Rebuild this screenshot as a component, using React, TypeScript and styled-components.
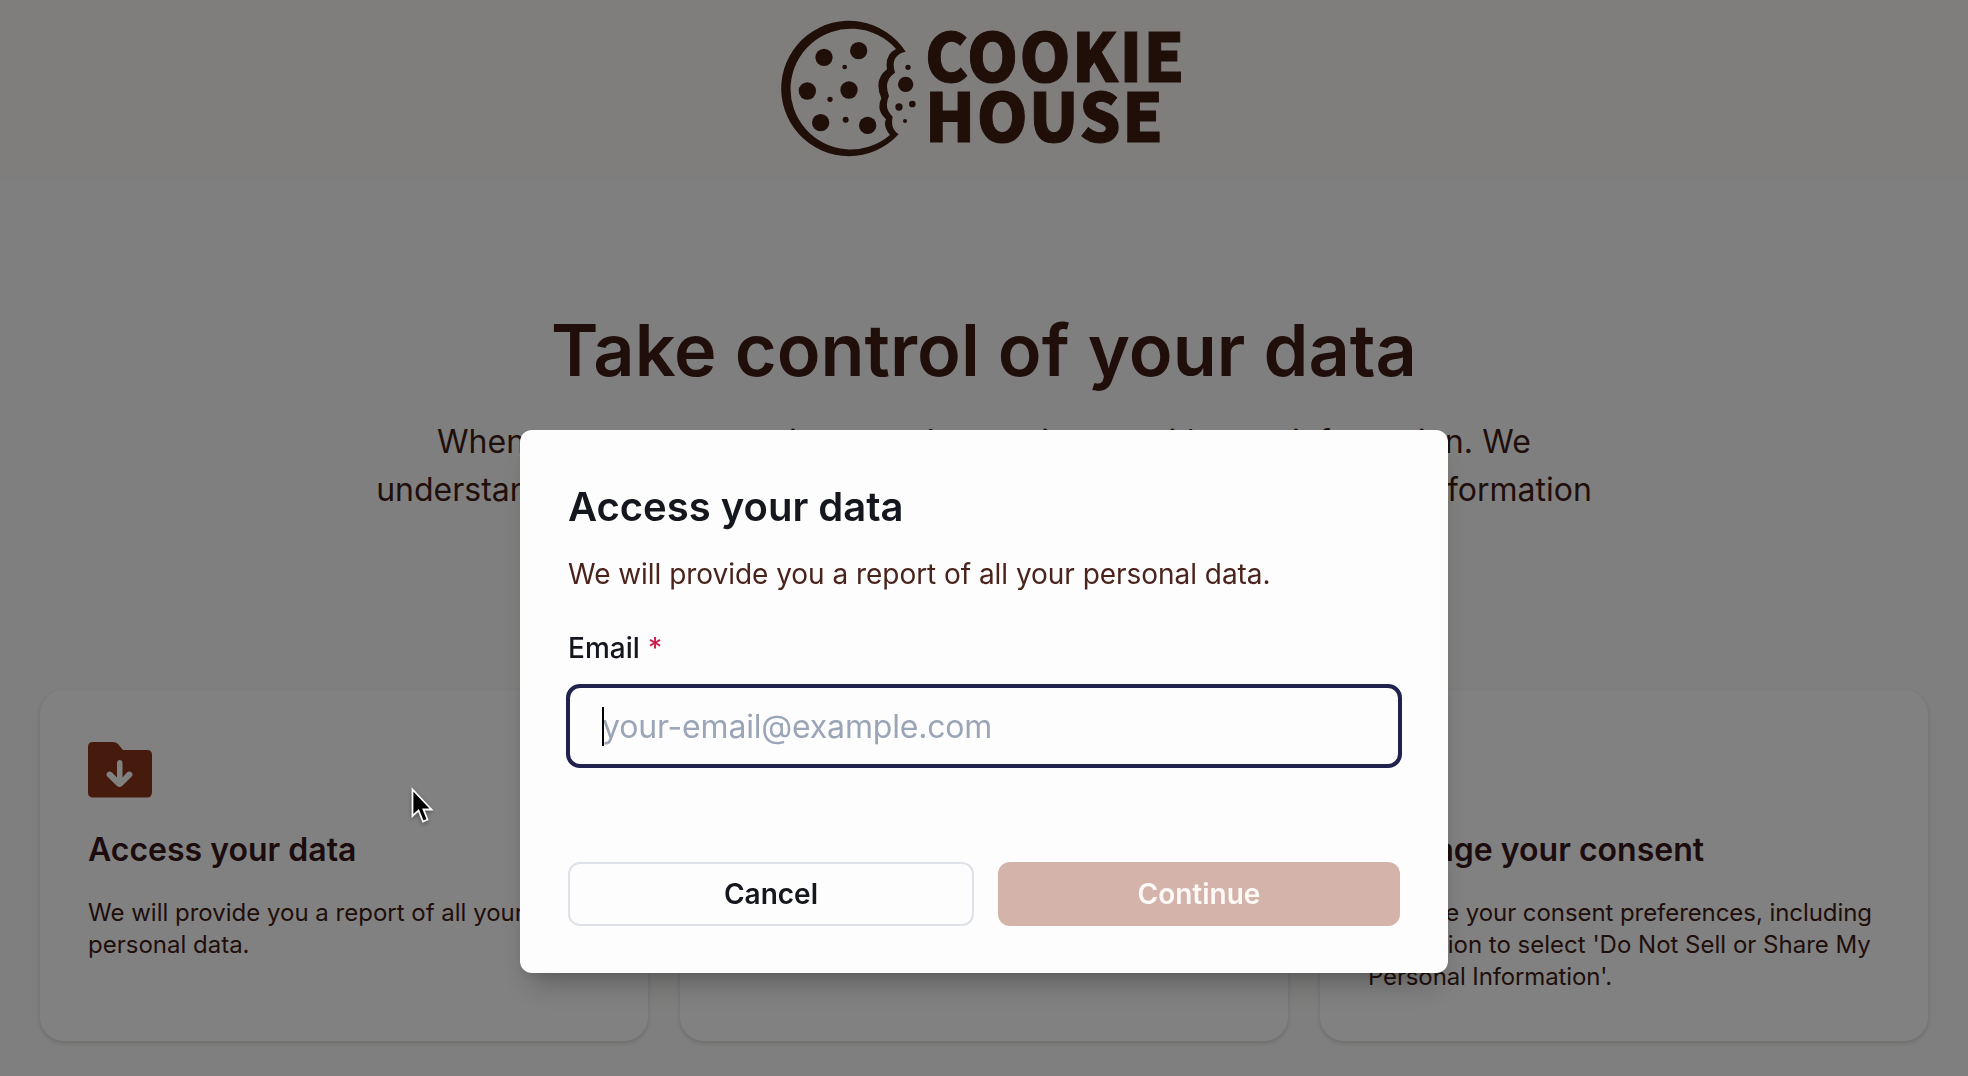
import React from "react";
import styled, { createGlobalStyle } from "styled-components";

const GlobalStyle = createGlobalStyle`
  *, *::before, *::after { box-sizing: border-box; }
  body {
    margin: 0;
    overflow: hidden;
    background: #fcfcfb;
    font-family: Inter, "Liberation Sans", sans-serif;
    -webkit-font-smoothing: antialiased;
  }
  h1, h2, p { margin: 0; }
`;

const Page = styled.div`
  height: 1076px;
  overflow: hidden;
  color: #401c16;
`;

const Header = styled.header`
  height: 179px;
  display: flex;
  justify-content: center;
  background: #fbfaf6;
`;

const Logo = styled.svg`
  width: 440px;
  height: 179px;
  margin-right: 8px;
  fill: #401c12;
`;

const LogoText = styled.text`
  font-family: "Noto Sans CJK SC", "Noto Sans", sans-serif;
  font-size: 67px;
  font-weight: 900;
  letter-spacing: 1.5px;
  stroke: #401c12;
  stroke-width: 1px;
`;

const Main = styled.main`
  display: flex;
  flex-direction: column;
  align-items: center;
  padding: 123px 40px 0;
`;

const Title = styled.h1`
  font-size: 72px;
  line-height: 96px;
  font-weight: 600;
  white-space: nowrap;
`;

const Intro = styled.p`
  margin-top: 20px;
  height: 272px;
  font-size: 32px;
  line-height: 48px;
  font-weight: 400;
  text-align: center;
  white-space: nowrap;
`;

const Line = styled.span<{ $word?: number; $letter?: number }>`
  display: block;
  word-spacing: ${(p) => p.$word ?? 0}px;
  letter-spacing: ${(p) => p.$letter ?? 0}px;
`;

const Cards = styled.section`
  width: 100%;
  display: grid;
  grid-template-columns: repeat(3, 1fr);
  gap: 32px;
`;

const Card = styled.article`
  height: 351px;
  padding: 48px;
  display: flex;
  flex-direction: column;
  align-items: flex-start;
  border-radius: 24px;
  background: #ffffff;
  box-shadow: 0 2px 4px rgba(0, 0, 0, 0.11), 0 2px 6px rgba(0, 0, 0, 0.06);
`;

const CardIcon = styled.svg`
  width: 64px;
  height: 64px;
  fill: #8c351c;
`;

const CardTitle = styled.h2`
  margin-top: 28px;
  font-size: 32px;
  line-height: 40px;
  font-weight: 600;
  color: #38181c;
  white-space: nowrap;
`;

const CardText = styled.p`
  margin-top: 27px;
  font-size: 24px;
  line-height: 32px;
  font-weight: 400;
  white-space: nowrap;
`;

const Overlay = styled.div`
  position: fixed;
  inset: 0;
  padding-top: 430px;
  display: flex;
  align-items: flex-start;
  justify-content: center;
  background: rgba(0, 0, 0, 0.495);
`;

const Dialog = styled.section`
  width: 928px;
  height: 543px;
  padding: 53px 48px 47px;
  display: flex;
  flex-direction: column;
  border-radius: 12px;
  background: #fdfdfd;
  box-shadow: 0 20px 30px -10px rgba(0, 0, 0, 0.25), 0 8px 12px -6px rgba(0, 0, 0, 0.12);
`;

const DialogTitle = styled.h2`
  font-size: 40px;
  line-height: 48px;
  font-weight: 600;
  color: #15171f;
`;

const DialogText = styled.p`
  margin-top: 23px;
  font-size: 28px;
  line-height: 40px;
  letter-spacing: -0.04px;
  color: #4a231d;
  white-space: nowrap;
`;

const Label = styled.label`
  margin-top: 34px;
  font-size: 28px;
  line-height: 40px;
  font-weight: 500;
  color: #15171f;
`;

const Required = styled.span`
  margin-left: 8px;
  color: #cb1f4d;
`;

const Field = styled.div`
  position: relative;
  margin: 16px -2px 0;
`;

const Input = styled.input`
  display: block;
  width: 100%;
  height: 84px;
  padding: 0 32px;
  border: 4px solid #20234d;
  border-radius: 14px;
  outline: none;
  background: transparent;
  caret-color: transparent;
  font: 400 32px/48px Inter, "Liberation Sans", sans-serif;
  letter-spacing: -0.18px;
  color: #15171f;
  &::placeholder { color: #9ba5b8; opacity: 1; }
`;

const Caret = styled.span`
  position: absolute;
  left: 36px;
  top: 23px;
  width: 2px;
  height: 39px;
  background: #000;
`;

const Actions = styled.div`
  margin-top: auto;
  display: grid;
  grid-template-columns: 406px 402px;
  justify-content: space-between;
`;

const Button = styled.button<{ $primary?: boolean }>`
  height: 64px;
  padding: 0;
  border: ${(p) => (p.$primary ? "0" : "2px solid #dfe1e8")};
  border-radius: 12px;
  background: ${(p) => (p.$primary ? "#d4b3aa" : "transparent")};
  color: ${(p) => (p.$primary ? "#fdf9f7" : "#15171f")};
  font: 600 28px/40px Inter, "Liberation Sans", sans-serif;
`;

const Pointer = styled.svg`
  position: fixed;
  left: 406px;
  top: 781px;
  width: 32px;
  height: 46px;
  filter: drop-shadow(0 2px 2px rgba(0, 0, 0, 0.35));
`;

const CHIPS = [
  [192, 172, 26], [296, 152, 26], [142, 273, 26], [267, 270, 26],
  [182, 368, 26], [323, 376, 26], [254, 201, 7], [210, 298, 8],
  [257, 359, 9], [444, 202, 8], [437, 253, 23], [417, 321, 11],
  [457, 312, 10], [435, 363, 6],
];

const CookieLogo = () => (
  <Logo viewBox="0 0 440 179" role="img" aria-label="Cookie House">
    <g transform="scale(0.33333)">
      <path
        fillRule="evenodd"
        d="M437 155A203 203 0 1 0 416 403Q390 386 398 350Q370 324 387 288Q369 242 405 218Q389 166 437 155Z
           M408 147A181 181 0 1 0 390 405Q368 378 378 358Q347 330 364 295Q340 238 381 208Q374 164 408 147Z"
      />
      {CHIPS.map(([cx, cy, r]) => (
        <circle key={`${cx}-${cy}`} cx={cx} cy={cy} r={r} />
      ))}
    </g>
    <LogoText x="165" y="81.500" textLength="261" lengthAdjust="spacingAndGlyphs">COOKIE</LogoText>
    <LogoText x="165" y="141.500" textLength="239.500" lengthAdjust="spacingAndGlyphs">HOUSE</LogoText>
  </Logo>
);

const FolderIcon = () => (
  <CardIcon viewBox="0 0 64 64">
    <path
      fillRule="evenodd"
      d="M5 4H25Q28 4 30 6L35 12H59Q64 12 64 17V54Q64 59.500 59 59.500H5Q0 59.500 0 54.500V9Q0 4 5 4Z
         M29 25V39.500L24 34.500C21 31.500 16.500 35.500 19.500 38.800L29 48Q31.500 50 34 48L43.500 38.800C46.500 35.500 42 31.500 39 34.500L34.500 39.500V25C34.500 21 29 21 29 25Z"
    />
  </CardIcon>
);

const ShieldIcon = () => (
  <CardIcon viewBox="0 0 64 64">
    <path d="M32 4L58 14V31Q56 50 32 60Q8 50 6 31V14Z" />
  </CardIcon>
);

export default function App() {
  return (
    <>
      <GlobalStyle />
      <Page>
        <Header>
          <CookieLogo />
        </Header>
        <Main>
          <Title>Take control of your data</Title>
          <Intro>
            <Line $word={0.45}>When you use our services, you’re trusting us with your information. We</Line>
            <Line $word={1.25}>
              understand this is a big responsibility and work hard to protect your information
            </Line>
            <Line>and put you in control.</Line>
          </Intro>
          <Cards>
            <Card>
              <FolderIcon />
              <CardTitle>Access your data</CardTitle>
              <CardText>
                <Line>We will provide you a report of all your</Line>
                <Line>personal data.</Line>
              </CardText>
            </Card>
            <Card>
              <ShieldIcon />
              <CardTitle>Erase your data</CardTitle>
              <CardText>We will erase all of your personal data.</CardText>
            </Card>
            <Card>
              <ShieldIcon />
              <CardTitle>Manage your consent</CardTitle>
              <CardText>
                <Line $letter={-0.07}>Manage your consent preferences, including</Line>
                <Line>the option to select 'Do Not Sell or Share My</Line>
                <Line $letter={-0.13}>Personal Information'.</Line>
              </CardText>
            </Card>
          </Cards>
        </Main>
      </Page>
      <Overlay>
        <Dialog role="dialog" aria-label="Access your data">
          <DialogTitle>Access your data</DialogTitle>
          <DialogText>We will provide you a report of all your personal data.</DialogText>
          <Label htmlFor="email">
            Email<Required>*</Required>
          </Label>
          <Field>
            <Input id="email" placeholder="your-email@example.com" />
            <Caret />
          </Field>
          <Actions>
            <Button>Cancel</Button>
            <Button $primary>Continue</Button>
          </Actions>
        </Dialog>
      </Overlay>
      <Pointer viewBox="0 0 32 46">
        <path
          d="M6.500 8.500V35L12.500 29.500L17 40.500L21.500 38.500L17.500 28.500H25.500Z"
          fill="#000"
          stroke="#fff"
          strokeWidth="1.8"
        />
      </Pointer>
    </>
  );
}
